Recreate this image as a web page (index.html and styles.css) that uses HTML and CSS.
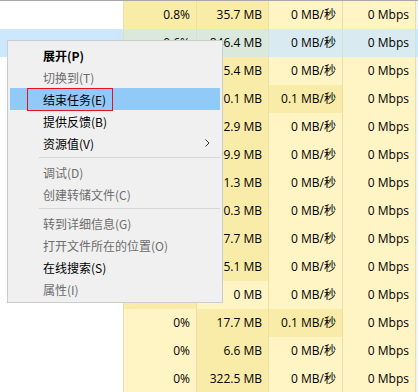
FILE: index.html
```html
<!DOCTYPE html>
<html lang="zh-CN">
<head>
<meta charset="utf-8">
<title>任务管理器</title>
<link rel="stylesheet" href="styles.css">
</head>
<body>
<div class="screen">
  <div class="table">
    <div class="row"><div class="name"></div><div class="cell cpu dark">0.8%</div><div class="cell mem dark">35.7 MB</div><div class="cell disk">0 MB/秒</div><div class="cell net">0 Mbps</div><div class="edge"></div></div>
    <div class="row selected"><div class="name"></div><div class="cell cpu dark">0.6%</div><div class="cell mem dark">846.4 MB</div><div class="cell disk">0 MB/秒</div><div class="cell net">0 Mbps</div><div class="edge"></div></div>
    <div class="row"><div class="name"></div><div class="cell cpu">0%</div><div class="cell mem dark">5.4 MB</div><div class="cell disk">0 MB/秒</div><div class="cell net">0 Mbps</div><div class="edge"></div></div>
    <div class="row"><div class="name"></div><div class="cell cpu">0%</div><div class="cell mem dark">0.1 MB</div><div class="cell disk dark">0.1 MB/秒</div><div class="cell net">0 Mbps</div><div class="edge"></div></div>
    <div class="row"><div class="name"></div><div class="cell cpu">0%</div><div class="cell mem dark">2.9 MB</div><div class="cell disk">0 MB/秒</div><div class="cell net">0 Mbps</div><div class="edge"></div></div>
    <div class="row"><div class="name"></div><div class="cell cpu">0%</div><div class="cell mem dark">9.9 MB</div><div class="cell disk">0 MB/秒</div><div class="cell net">0 Mbps</div><div class="edge"></div></div>
    <div class="row"><div class="name"></div><div class="cell cpu">0%</div><div class="cell mem dark">1.3 MB</div><div class="cell disk">0 MB/秒</div><div class="cell net">0 Mbps</div><div class="edge"></div></div>
    <div class="row"><div class="name"></div><div class="cell cpu">0%</div><div class="cell mem dark">0.3 MB</div><div class="cell disk">0 MB/秒</div><div class="cell net">0 Mbps</div><div class="edge"></div></div>
    <div class="row"><div class="name"></div><div class="cell cpu">0%</div><div class="cell mem dark">7.7 MB</div><div class="cell disk">0 MB/秒</div><div class="cell net">0 Mbps</div><div class="edge"></div></div>
    <div class="row"><div class="name"></div><div class="cell cpu">0%</div><div class="cell mem dark">5.1 MB</div><div class="cell disk">0 MB/秒</div><div class="cell net">0 Mbps</div><div class="edge"></div></div>
    <div class="row"><div class="name"></div><div class="cell cpu dark">0%</div><div class="cell mem">0 MB</div><div class="cell disk">0 MB/秒</div><div class="cell net">0 Mbps</div><div class="edge"></div></div>
    <div class="row"><div class="name"></div><div class="cell cpu">0%</div><div class="cell mem dark">17.7 MB</div><div class="cell disk dark">0.1 MB/秒</div><div class="cell net">0 Mbps</div><div class="edge"></div></div>
    <div class="row"><div class="name"></div><div class="cell cpu">0%</div><div class="cell mem dark">6.6 MB</div><div class="cell disk">0 MB/秒</div><div class="cell net">0 Mbps</div><div class="edge"></div></div>
    <div class="row"><div class="name"></div><div class="cell cpu">0%</div><div class="cell mem dark">322.5 MB</div><div class="cell disk">0 MB/秒</div><div class="cell net">0 Mbps</div><div class="edge"></div></div>
  </div>

  <div class="menu">
    <div class="item bold">展开(P)</div>
    <div class="item disabled">切换到(T)</div>
    <div class="item active"><span class="label">结束任务(E)</span><span class="mark"></span></div>
    <div class="item">提供反馈(B)</div>
    <div class="item submenu">资源值(V)<svg class="chev" width="5" height="8" viewBox="0 0 5 8"><path d="M0.5 0.5 L4 4 L0.5 7.5" fill="none" stroke="#333" stroke-width="1"/></svg></div>
    <div class="sep"></div>
    <div class="item disabled">调试(D)</div>
    <div class="item disabled">创建转储文件(C)</div>
    <div class="sep"></div>
    <div class="item disabled">转到详细信息(G)</div>
    <div class="item disabled">打开文件所在的位置(O)</div>
    <div class="item">在线搜索(S)</div>
    <div class="item disabled">属性(I)</div>
  </div>
</div>
</body>
</html>
```

FILE: styles.css
```css
html, body {
  margin: 0;
  padding: 0;
  background: #ffffff;
}

.screen {
  position: relative;
  width: 418px;
  height: 392px;
  overflow: hidden;
  font-family: "Open Sans", "Noto Sans CJK SC", sans-serif;
  font-size: 12px;
  color: #000;
}

.table {
  display: flex;
  flex-direction: column;
  border-top: 1px solid #a8a8a8;
}

.row {
  display: flex;
  height: 28px;
  line-height: 28px;
}

.name {
  width: 123px;
  flex: none;
}

.cell {
  flex: none;
  box-sizing: border-box;
  text-align: right;
  padding-right: 6px;
  border-right: 1px solid #ecdea6;
  background: #fff4c4;
  white-space: nowrap;
}

.cell.dark {
  background: #f9eca8;
}

.cpu { width: 74px; border-left: 1px solid #ecdea6; }
.mem { width: 72px; }
.disk { width: 74px; }
.net { width: 73px; }

.edge {
  flex: 1;
  background: #f3f3f3;
}

.row.selected .name { background: #cce8ff; }
.row.selected .cell { background: #d9ebf1; border-right-color: #d6e2d8; }
.row.selected .cell.dark { background: #dbe8dc; }
.row.selected .edge { background: #cce8ff; }

/* context menu */
.menu {
  position: absolute;
  left: 7px;
  top: 40px;
  width: 216px;
  box-sizing: border-box;
  background: #f0f0f0;
  border: 1px solid #cccccc;
  padding: 3px 2px 2px 2px;
  font-family: "Noto Sans CJK SC", "Open Sans", sans-serif;
  display: flex;
  flex-direction: column;
}

.item {
  position: relative;
  display: flex;
  align-items: center;
  height: 22px;
  padding-left: 33px;
  white-space: nowrap;
  color: #000;
}

.item.bold { font-weight: bold; }
.item.disabled { color: #6d6d6d; }
.item.active { background: #91c9f7; }

.item .mark {
  position: absolute;
  left: 17px;
  top: 0;
  width: 86px;
  height: 23px;
  box-sizing: border-box;
  border: 1px solid #e81123;
}

.item.submenu { justify-content: space-between; padding-right: 10px; }
.chev { display: block; }

.sep {
  height: 1px;
  background: #d7d7d7;
  margin: 3px 0 3px 29px;
}
```
